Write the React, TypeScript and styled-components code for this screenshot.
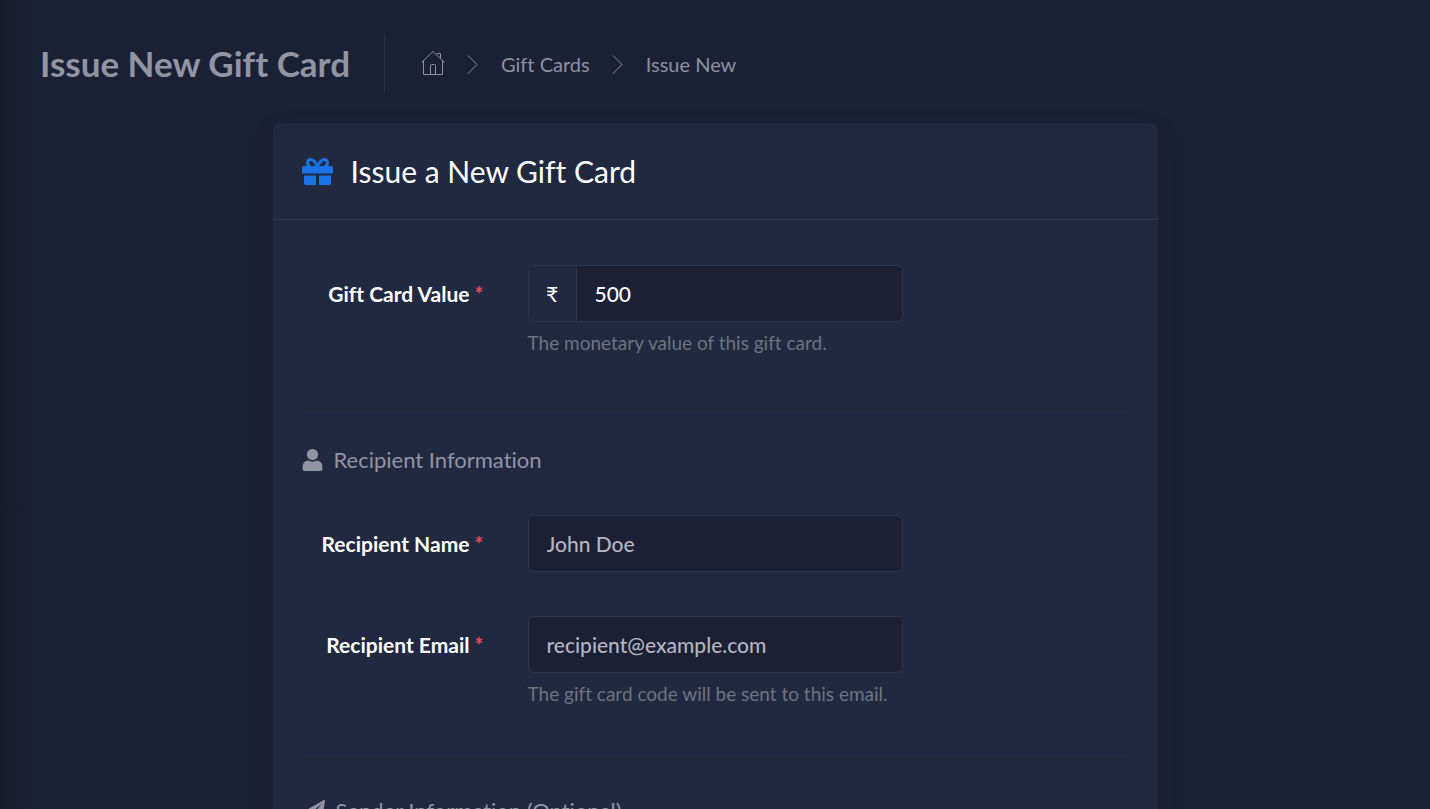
import React from 'react';
import styled, { createGlobalStyle } from 'styled-components';
import { FaPaperPlane } from 'react-icons/fa';

const GlobalStyle = createGlobalStyle`
  *, *::before, *::after { box-sizing: border-box; }
  html { scrollbar-width: none; }
  body {
    margin: 0;
    background: #1b2135;
    color: #fff;
    font-family: Lato, "Noto Sans", sans-serif;
    font-size: 21px;
    line-height: 32px;
    font-variant-ligatures: none;
  }
  h1, h2, h3, ol, p { margin: 0; padding: 0; font-weight: 400; }
`;

const Page = styled.main`
  min-height: 100vh;
  padding: 33px 40px 0;
  background: linear-gradient(to right, #181c2d, #1b2135 36px);
`;

const PageHeader = styled.header`
  display: flex;
  align-items: center;
  height: 60px;
`;

const PageTitle = styled.h1`
  padding-right: 34px;
  color: #9194a1;
  font-size: 35px;
  font-weight: 700;
  line-height: 60px;
  border-right: 1px solid #2a2f42;
`;

const Breadcrumb = styled.ol`
  display: flex;
  align-items: center;
  gap: 22px;
  padding: 2px 0 0 36px;
  list-style: none;
  color: #8d91a0;
  font-size: 20px;
`;

const Crumb = styled.li`
  display: flex;
  align-items: center;
`;

const CrumbLink = styled.a`
  display: flex;
  color: inherit;
  text-decoration: none;
`;

const Card = styled.section`
  max-width: 885px;
  margin: 30px auto 0;
  background: #212940;
  border-radius: 8px;
  box-shadow: 0 8px 20px rgba(30, 34, 44, 0.3);
`;

const CardHeader = styled.div`
  display: flex;
  align-items: center;
  gap: 18px;
  height: 97px;
  padding: 0 29px;
  border-bottom: 1px solid #2f364b;
  color: #1a73e8;
`;

const CardTitle = styled.h2`
  color: #fff;
  font-size: 30px;
  line-height: 40px;
`;

const CardBody = styled.form`
  padding: 45px 29px;
`;

const Row = styled.div`
  display: grid;
  grid-template-columns: 182px 375px;
  column-gap: 44px;
  margin-bottom: 44px;
`;

const Label = styled.label`
  padding-top: 13px;
  font-weight: 700;
  text-align: right;
`;

const Required = styled.span`
  color: #e9495a;
`;

const Field = styled.div`
  display: flex;
  height: 57px;
  background: #1b2035;
  border: 1px solid #2f364b;
  border-radius: 6px;
  overflow: hidden;
`;

const Prefix = styled.span`
  display: flex;
  align-items: center;
  justify-content: center;
  width: 48px;
  background: #212940;
  border-right: 1px solid #2f364b;
`;

const Input = styled.input`
  flex: 1;
  min-width: 0;
  padding: 0 18px;
  border: 0;
  outline: 0;
  background: transparent;
  color: #fff;
  font: inherit;
  font-weight: 500;
  &::placeholder { color: #b4b6bf; opacity: 1; }
`;

const Help = styled.p`
  padding: 6px 0;
  color: #6c757d;
  font-size: 19px;
  line-height: 30px;
`;

const Divider = styled.hr`
  height: 1px;
  margin: 0 0 35px;
  border: 0;
  background: #1d2535;
`;

const SectionTitle = styled.h3`
  display: flex;
  align-items: center;
  gap: 11px;
  margin-bottom: 39px;
  color: #9194a1;
  font-size: 22px;
`;

const HomeIcon = () => (
  <svg width="24" height="26" viewBox="0 0 24 26" fill="none" stroke="currentColor" strokeWidth="1" aria-label="Home">
    <path d="M0.5 11.5 L12 0.5 L23.5 11.5 M2.5 9.5 V23.5 H21.5 V9.5 M9.5 23.5 V14.5 Q9.5 13.5 10.5 13.5 H13.5 Q14.5 13.5 14.5 14.5 V23.5 M16 2.5 H19.5 V7" />
  </svg>
);

const Chevron = () => (
  <svg width="12" height="20" viewBox="0 0 12 20" fill="none" stroke="currentColor" strokeWidth="1" aria-hidden="true">
    <path d="M1 1.5 L10 10.5 L1 19.5" />
  </svg>
);

const GiftIcon = () => (
  <svg width="31" height="28" viewBox="0 0 31 28" fill="currentColor" aria-hidden="true">
    <path d="M2 9 H29 Q31 9 31 11 V16.5 H0 V11 Q0 9 2 9 Z M2 18.5 H14 V28 H4 Q2 28 2 26 Z M17 18.5 H29 V26 Q29 28 27 28 H17 Z" />
    <path d="M15.5 9 C13.5 5.5 11.5 2.5 9 2.5 C6.9 2.5 5.6 4 5.6 5.8 C5.6 7.5 6.5 9.2 8.5 9.2 M15.5 9 C17.5 5.5 19.5 2.5 22 2.5 C24.1 2.5 25.4 4 25.4 5.8 C25.4 7.5 24.5 9.2 22.5 9.2" fill="none" stroke="currentColor" strokeWidth="3" />
  </svg>
);

const UserIcon = () => (
  <svg width="21" height="24" viewBox="0 0 21 24" fill="currentColor" aria-hidden="true">
    <circle cx="10.5" cy="6.5" r="5.6" />
    <path d="M6 12.6 Q10.5 14.8 15 12.6 Q20.4 13.2 20.4 19 V21.2 Q20.4 23 18.6 23 H2.4 Q0.6 23 0.6 21.2 V19 Q0.6 13.2 6 12.6 Z" />
  </svg>
);

type FormFieldProps = {
  id: string;
  label: string;
  type?: string;
  value?: string;
  placeholder?: string;
  prefix?: string;
  help?: string;
};

const FormField = ({ id, label, type = 'text', value, placeholder, prefix, help }: FormFieldProps) => (
  <Row>
    <Label htmlFor={id}>
      {label} <Required>*</Required>
    </Label>
    <div>
      <Field>
        {prefix && <Prefix>{prefix}</Prefix>}
        <Input id={id} type={type} defaultValue={value} placeholder={placeholder} />
      </Field>
      {help && <Help>{help}</Help>}
    </div>
  </Row>
);

export default function App() {
  return (
    <>
      <GlobalStyle />
      <Page>
        <PageHeader>
          <PageTitle>Issue New Gift Card</PageTitle>
          <nav aria-label="Breadcrumb">
            <Breadcrumb>
              <Crumb><CrumbLink href="#home"><HomeIcon /></CrumbLink></Crumb>
              <Chevron />
              <Crumb><CrumbLink href="#gift-cards">Gift Cards</CrumbLink></Crumb>
              <Chevron />
              <Crumb>Issue New</Crumb>
            </Breadcrumb>
          </nav>
        </PageHeader>
        <Card>
          <CardHeader>
            <GiftIcon />
            <CardTitle>Issue a New Gift Card</CardTitle>
          </CardHeader>
          <CardBody>
            <FormField id="value" label="Gift Card Value" value="500" prefix="₹" help="The monetary value of this gift card." />
            <Divider />
            <SectionTitle><UserIcon />Recipient Information</SectionTitle>
            <FormField id="name" label="Recipient Name" placeholder="John Doe" />
            <FormField id="email" label="Recipient Email" type="email" placeholder="recipient@example.com" help="The gift card code will be sent to this email." />
            <Divider />
            <SectionTitle><FaPaperPlane size={23} />Sender Information (Optional)</SectionTitle>
          </CardBody>
        </Card>
      </Page>
    </>
  );
}
